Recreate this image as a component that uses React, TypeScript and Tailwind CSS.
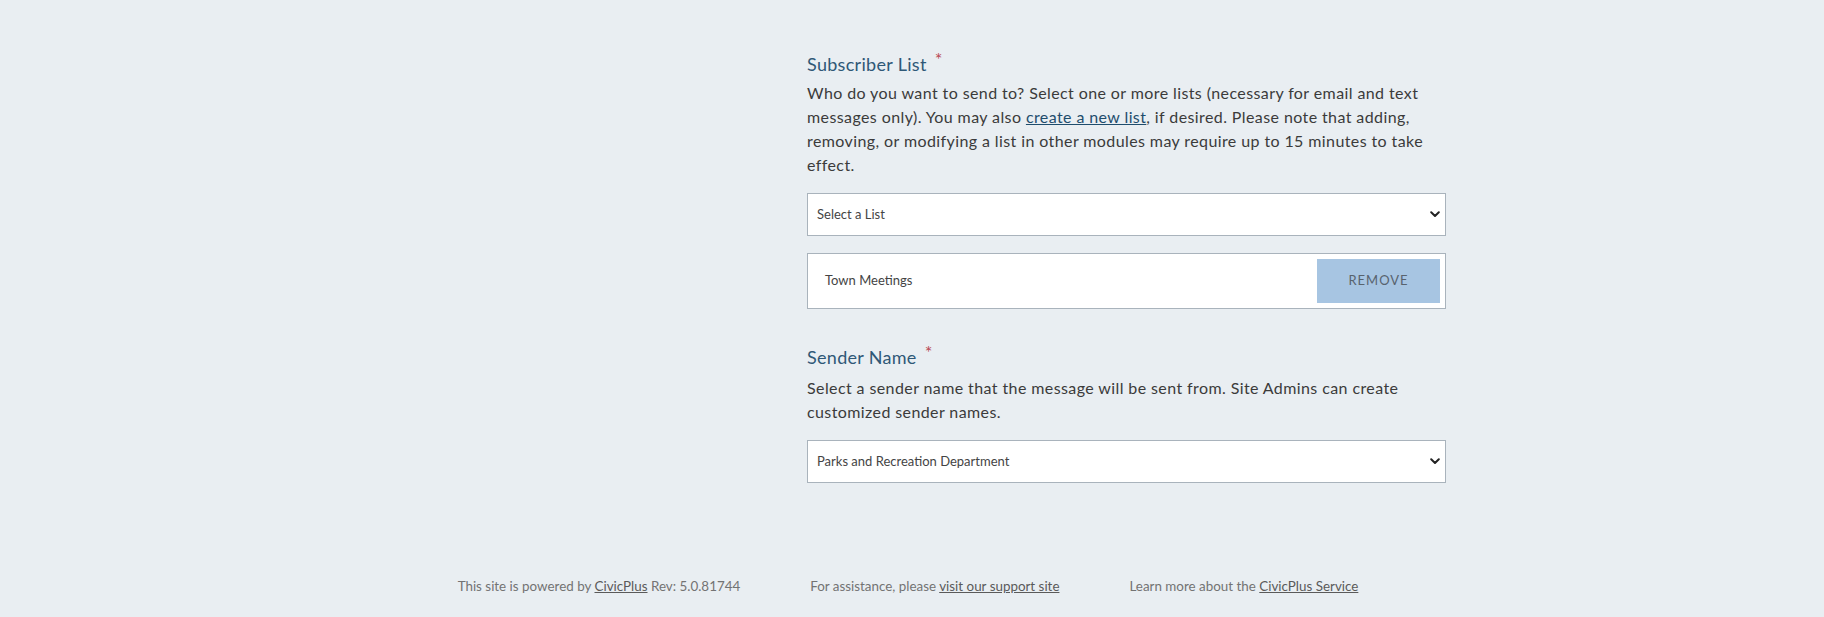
import React from "react";

function Chevron() {
  return (
    <svg width="10" height="7" viewBox="0 0 10 7" className="shrink-0">
      <path d="M1.2 1.3 L5 5 L8.8 1.3" fill="none" stroke="#222" strokeWidth="2" strokeLinecap="round" strokeLinejoin="round" />
    </svg>
  );
}

function FakeSelect({ value }: { value: string }) {
  return (
    <div className="flex h-[43px] items-center justify-between border border-[#a9b3bc] bg-white pl-[9px] pr-[5px]">
      <span className="text-[13px] text-[#444]">{value}</span>
      <Chevron />
    </div>
  );
}

function Label({ text }: { text: string }) {
  return (
    <div className="flex items-start leading-[24px]">
      <span className="text-[18px] tracking-[0.3px] text-[#2f5877]">{text}</span>
      <span className="ml-[8px] -mt-[4px] text-[18px] leading-[22px] text-[#b84a55]">*</span>
    </div>
  );
}

export default function App() {
  return (
    <div
      className="min-h-[617px] w-full bg-[#e9eef2]"
      style={{ fontFamily: "Lato, 'Open Sans', sans-serif" }}
    >
      <div className="ml-[807px] w-[639px] pt-[52px]">
        <Label text="Subscriber List" />
        <p className="mt-[5px] text-[16px] leading-[24px] tracking-[0.4px] text-[#3b3b3b]">
          Who do you want to send to? Select one or more lists (necessary for email and text messages only). You may also{" "}
          <a className="text-[#1f4d6d] underline">create a new list</a>, if desired. Please note that adding, removing, or modifying a list in other modules may require up to 15 minutes to take effect.
        </p>
        <div className="mt-[16px]">
          <FakeSelect value="Select a List" />
        </div>
        <div className="mt-[17px] flex h-[56px] items-center justify-between border border-[#a9b3bc] bg-white pl-[17px] pr-[5px]">
          <span className="text-[13px] text-[#444]">Town Meetings</span>
          <div className="flex h-[44px] w-[123px] items-center justify-center bg-[#a7c5e2] text-[13px] tracking-[1px] text-[#58636e]">
            REMOVE
          </div>
        </div>
        <div className="mt-[36px]">
          <Label text="Sender Name" />
        </div>
        <p className="mt-[7px] text-[16px] leading-[24px] tracking-[0.4px] text-[#3b3b3b]">
          Select a sender name that the message will be sent from. Site Admins can create customized sender names.
        </p>
        <div className="mt-[16px]">
          <FakeSelect value="Parks and Recreation Department" />
        </div>
      </div>
      <div className="mt-[93px] flex justify-center gap-[70px] pb-[20px] pr-[8px] text-[13.4px] leading-[20px] text-[#737373]">
        <span>
          This site is powered by <a className="text-[#5a5a5a] underline">CivicPlus</a> Rev: 5.0.81744
        </span>
        <span>
          For assistance, please <a className="text-[#5a5a5a] underline">visit our support site</a>
        </span>
        <span>
          Learn more about the <a className="text-[#5a5a5a] underline">CivicPlus Service</a>
        </span>
      </div>
    </div>
  );
}
